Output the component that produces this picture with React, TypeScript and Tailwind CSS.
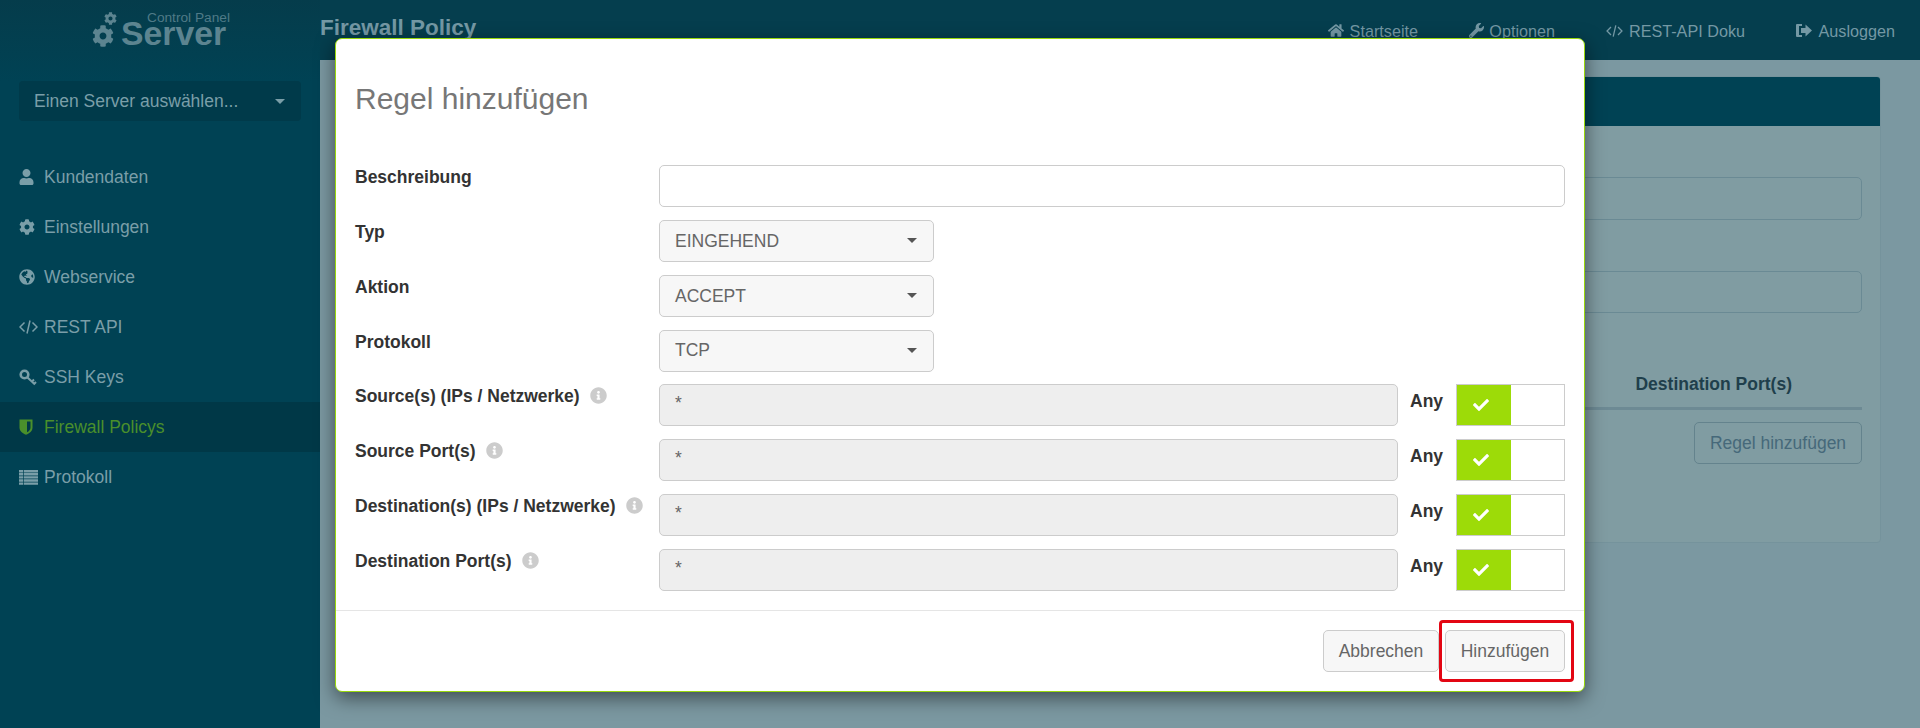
import React from 'react';
import {
  FaCheck,
  FaCog,
  FaGlobeAmericas,
  FaHome,
  FaInfoCircle,
  FaUser,
  FaWrench,
} from 'react-icons/fa';

const CodeIcon = ({ className }: { className: string }) => (
  <svg viewBox="0 0 19 16" className={className} fill="none" stroke="currentColor" strokeWidth="1.5">
    <path d="M5.5 3.5 1 8l4.5 4.5M13.5 3.5 18 8l-4.5 4.5M11 1.5 8 14.5" />
  </svg>
);

const KeyIcon = () => (
  <svg viewBox="0 0 18 17" className="w-[18px] h-[17px]" fill="none" stroke="currentColor">
    <circle cx="5.5" cy="5.5" r="3.8" strokeWidth="2.6" />
    <path d="M8.5 8.5 16 15.5M13 12.5l2-2M15.5 14.5l1.5-1.5" strokeWidth="2" />
  </svg>
);

const ShieldIcon = () => (
  <svg viewBox="0 0 14 16" className="w-[14px] h-[16px]" fill="currentColor">
    <path d="M0.5 0.5h13v8c0 3.5-3 5.8-6.5 7.2C3.500 14.300 0.500 12 0.500 8.500z" />
    <path d="M8 2.500h3.500v6c0 2.200-1.500 3.800-3.500 4.800z" fill="#003847" />
  </svg>
);

const ListIcon = () => (
  <svg viewBox="0 0 19 15" className="w-[19px] h-[15px]" fill="currentColor">
    <path d="M0 0h19v2.400H0zM0 3.100h19v2.400H0zM0 6.200h19v2.400H0zM0 9.300h19v2.400H0zM0 12.400h19v2.400H0z" />
    <path d="M4 0h.7v15H4z" fill="#004254" />
  </svg>
);

const LogoutIcon = () => (
  <svg viewBox="0 0 16 15" className="w-[16px] h-[15px]" fill="currentColor">
    <path d="M1 1h5v2H3v9h3v2H1q-1 0-1-1V2q0-1 1-1z" />
    <path d="M5 5h4.500V1.500L16 7.500l-6.500 6V10H5z" />
  </svg>
);

const navItems = [
  { label: 'Kundendaten', icon: <FaUser className="w-[15px] h-[16px]" /> },
  { label: 'Einstellungen', icon: <FaCog className="w-[16px] h-[16px]" /> },
  { label: 'Webservice', icon: <FaGlobeAmericas className="w-[16px] h-[16px]" /> },
  { label: 'REST API', icon: <CodeIcon className="w-[19px] h-[16px]" /> },
  { label: 'SSH Keys', icon: <KeyIcon /> },
  { label: 'Firewall Policys', icon: <ShieldIcon />, active: true },
  { label: 'Protokoll', icon: <ListIcon /> },
];

const topLinks = [
  { label: 'Startseite', icon: <FaHome className="w-[16px] h-[15px]" />, w: 'w-[90px]' },
  { label: 'Optionen', icon: <FaWrench className="w-[15px] h-[15px]" />, w: 'w-[86px]' },
  { label: 'REST-API Doku', icon: <CodeIcon className="w-[17px] h-[14px]" />, w: 'w-[139px]' },
  { label: 'Ausloggen', icon: <LogoutIcon />, w: 'w-[99px]' },
];

const anyRows = ['Source(s) (IPs / Netzwerke)', 'Source Port(s)', 'Destination(s) (IPs / Netzwerke)', 'Destination Port(s)'];

const Sidebar = () => (
  <aside className="w-[320px] shrink-0 h-full flex flex-col bg-[#004254]">
    <div className="h-[81px] shrink-0 bg-gradient-to-b from-[#053c4b] to-[#004254] relative text-[#5c8490]">
      <FaCog className="absolute left-[92px] top-[25px] w-[22px] h-[22px]" />
      <FaCog className="absolute left-[104px] top-[12px] w-[13px] h-[13px]" />
      <span className="absolute left-[147px] top-[13px] text-[13.7px] leading-[10px] text-[#4f7a87]">Control Panel</span>
      <span className="absolute left-[121px] top-[20px] text-[33.8px] leading-[26px] font-bold">Server</span>
    </div>
    <div className="mx-[19px] h-[40px] shrink-0 rounded-[4px] bg-[#003a4a] flex items-center justify-between pl-[15px] pr-[16px] text-[17.5px] text-[#7a9ea8]">
      <span>Einen Server auswählen...</span>
      <span className="w-0 h-0 border-x-[5px] border-x-transparent border-t-[5px] border-t-[#7a9ea8]" />
    </div>
    <nav className="mt-[31px] flex flex-col">
      {navItems.map((item) => (
        <div
          key={item.label}
          className={
            item.active
              ? 'h-[50px] flex items-center text-[17.5px] bg-[#003847] text-[#4a8f2b]'
              : 'h-[50px] flex items-center text-[17.5px] text-[#7a9ea8]'
          }
        >
          <span className="w-[44px] pl-[19px] shrink-0 flex items-center">{item.icon}</span>
          {item.label}
        </div>
      ))}
    </nav>
  </aside>
);

const TopBar = () => (
  <header className="h-[60px] shrink-0 bg-[#053e4e] flex items-center justify-between">
    <h1 className="text-[22.5px] font-bold text-[#7498a4] -mt-[4px]">Firewall Policy</h1>
    <div className="flex items-center gap-[51px] pr-[25px] text-[16.2px] text-[#7498a4] mt-[2px]">
      {topLinks.map((link) => (
        <div key={link.label} className={`${link.w} flex items-center justify-between`}>
          {link.icon}
          <span>{link.label}</span>
        </div>
      ))}
    </div>
  </header>
);

const BackgroundCard = () => (
  <div className="flex-1 bg-[#7b98a1] pt-[16px] pl-[39px] pr-[39px]">
    <div className="h-[467px] rounded-[4px] bg-[#809ca2] border border-[#75939c] flex flex-col overflow-hidden">
      <div className="h-[49px] shrink-0 bg-[#004254]" />
      <div className="pl-[19px] pr-[18px] pt-[51px] flex flex-col">
        <div className="h-[43px] rounded-[5px] border border-[#6a8a94]" />
        <div className="h-[42px] mt-[51px] rounded-[5px] border border-[#6a8a94]" />
        <div className="mt-[58px] pb-[10px] border-b-[3px] border-[#6d8a94] text-right pr-[70px] text-[17.5px] font-bold text-[#1f3f4c]">
          Destination Port(s)
        </div>
        <div className="mt-[12px] flex justify-end">
          <div className="h-[42px] w-[168px] rounded-[5px] border border-[#64838d] flex items-center justify-center text-[17.5px] text-[#46697a]">
            Regel hinzufügen
          </div>
        </div>
      </div>
    </div>
  </div>
);

const Label = ({ text, info }: { text: string; info?: boolean }) => (
  <div className="w-[304px] shrink-0 flex items-start text-[17.5px] leading-[24px] font-bold text-[#333333]">
    <span>{text}</span>
    {info && <FaInfoCircle className="ml-[10px] mt-[3px] w-[17px] h-[17px] text-[#cccccc]" />}
  </div>
);

const SelectRow = ({ label, value }: { label: string; value: string }) => (
  <div className="flex">
    <Label text={label} />
    <div className="w-[275px] h-[42px] rounded-[5px] border border-[#cccccc] bg-[#f7f7f7] flex items-center justify-between pl-[15px] pr-[16px] text-[17.5px] text-[#666666]">
      <span>{value}</span>
      <span className="w-0 h-0 border-x-[5px] border-x-transparent border-t-[5px] border-t-[#555555]" />
    </div>
  </div>
);

const AnyRow = ({ label }: { label: string }) => (
  <div className="flex">
    <Label text={label} info />
    <div className="w-[739px] h-[42px] rounded-[5px] border border-[#cccccc] bg-[#eeeeee] pl-[15px] pt-[6px] text-[17.5px] leading-[25px] text-[#666666]">
      *
    </div>
    <div className="w-[58px] pl-[12px] text-[17.5px] leading-[34px] font-bold text-[#333333]">Any</div>
    <div className="w-[109px] h-[42px] border border-[#cccccc] bg-white">
      <div className="w-[54px] h-full bg-[#9ddb08] flex items-center justify-center pr-[6px] text-white">
        <FaCheck className="w-[16px] h-[16px]" />
      </div>
    </div>
  </div>
);

const RuleModal = () => (
  <div className="absolute left-[335px] top-[38px] w-[1250px] h-[654px] bg-white border-[1.5px] border-[#98d80c] rounded-[7px] shadow-[0_6px_19px_rgba(0,0,0,0.5)] flex flex-col">
    <h2 className="shrink-0 pl-[19px] pt-[43px] pb-[50px] text-[30px] leading-[33px] text-[#777777]">Regel hinzufügen</h2>
    <div className="flex-1 pl-[19px] pr-[19px] flex flex-col gap-[12.86px]">
      <div className="flex">
        <Label text="Beschreibung" />
        <div className="flex-1 h-[42px] rounded-[5px] border border-[#cccccc] bg-white" />
      </div>
      <SelectRow label="Typ" value="EINGEHEND" />
      <SelectRow label="Aktion" value="ACCEPT" />
      <SelectRow label="Protokoll" value="TCP" />
      {anyRows.map((label) => (
        <AnyRow key={label} label={label} />
      ))}
    </div>
    <div className="shrink-0 h-[81px] border-t border-[#e5e5e5] pt-[19px] pr-[19px] flex justify-end gap-[6px] text-[17.5px] text-[#666666]">
      <div className="w-[116px] h-[42px] rounded-[5px] border border-[#cccccc] bg-[#f7f7f7] flex items-center justify-center">Abbrechen</div>
      <div className="relative w-[120px] h-[42px] rounded-[5px] border border-[#cccccc] bg-[#f7f7f7] flex items-center justify-center">
        Hinzufügen
        <span className="absolute -left-[7px] -right-[10px] -top-[11px] -bottom-[11px] border-[3px] border-[#e30613] rounded-[4px]" />
      </div>
    </div>
  </div>
);

export default function App() {
  return (
    <div className="relative w-full h-[728px] overflow-hidden flex font-['Liberation_Sans',Arial,sans-serif]">
      <Sidebar />
      <div className="flex-1 flex flex-col min-w-0">
        <TopBar />
        <BackgroundCard />
      </div>
      <RuleModal />
    </div>
  );
}
